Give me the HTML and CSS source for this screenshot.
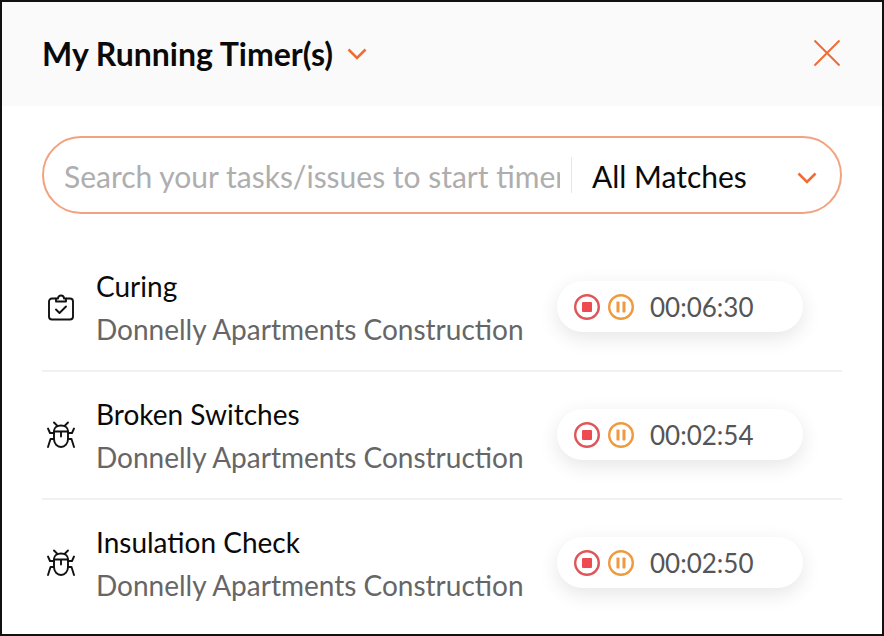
FILE: index.html
```html
<!DOCTYPE html>
<html lang="en">
<head>
<meta charset="utf-8">
<title>My Running Timer(s)</title>
<link rel="stylesheet" href="styles.css">
</head>
<body>
<main class="panel">
  <header class="head">
    <div class="head-title">
      <h1 class="title">My Running Timer(s)</h1>
      <svg class="chev-title" viewBox="0 0 20 12"><path d="M1.5 1.5 10 10l8.5-8.5"/></svg>
    </div>
    <svg class="close" viewBox="0 0 28 28"><path d="M1.5 1.5l25 25M26.500 1.500l-25 25"/></svg>
  </header>
  <section class="body">
    <div class="search">
      <input class="placeholder" type="text" placeholder="Search your tasks/issues to start timer">
      <div class="divider"></div>
      <div class="select">All Matches</div>
      <svg class="chev-select" viewBox="0 0 20 12"><path d="M1.500 1.500 10 10l8.500-8.500"/></svg>
    </div>
    <ul class="list">
      <li class="row">
        <svg class="type-icon" viewBox="0 0 30 30"><path d="M9.500 6.500H6a3 3 0 0 0-3 3v15a3 3 0 0 0 3 3h18a3 3 0 0 0 3-3v-15a3 3 0 0 0-3-3h-3.500"/><path d="M10 9.500V6.500h2c0-4 6-4 6 0h2v3z"/><path d="M10 17.500l3.500 3.500 6.500-6.500"/></svg>
        <div class="info"><div class="name">Curing</div><div class="project">Donnelly Apartments Construction</div></div>
        <div class="timer">
          <svg class="ctl stop" viewBox="0 0 26 26"><circle cx="13" cy="13" r="11.800"/><rect x="8" y="8" width="10" height="10" rx="1"/></svg>
          <svg class="ctl pause" viewBox="0 0 26 26"><circle cx="13" cy="13" r="11.800"/><rect x="8.500" y="7.500" width="3" height="11" rx=".8"/><rect x="14.500" y="7.500" width="3" height="11" rx=".8"/></svg>
          <span class="time">00:06:30</span>
        </div>
      </li>
      <li class="row">
        <svg class="type-icon" viewBox="0 0 30 30"><use href="#bug"/></svg>
        <div class="info"><div class="name">Broken Switches</div><div class="project">Donnelly Apartments Construction</div></div>
        <div class="timer">
          <svg class="ctl stop" viewBox="0 0 26 26"><circle cx="13" cy="13" r="11.800"/><rect x="8" y="8" width="10" height="10" rx="1"/></svg>
          <svg class="ctl pause" viewBox="0 0 26 26"><circle cx="13" cy="13" r="11.800"/><rect x="8.500" y="7.500" width="3" height="11" rx=".8"/><rect x="14.500" y="7.500" width="3" height="11" rx=".8"/></svg>
          <span class="time">00:02:54</span>
        </div>
      </li>
      <li class="row">
        <svg class="type-icon" viewBox="0 0 30 30"><use href="#bug"/></svg>
        <div class="info"><div class="name">Insulation Check</div><div class="project">Donnelly Apartments Construction</div></div>
        <div class="timer">
          <svg class="ctl stop" viewBox="0 0 26 26"><circle cx="13" cy="13" r="11.800"/><rect x="8" y="8" width="10" height="10" rx="1"/></svg>
          <svg class="ctl pause" viewBox="0 0 26 26"><circle cx="13" cy="13" r="11.800"/><rect x="8.500" y="7.500" width="3" height="11" rx=".8"/><rect x="14.500" y="7.500" width="3" height="11" rx=".8"/></svg>
          <span class="time">00:02:50</span>
        </div>
      </li>
    </ul>
  </section>
</main>
<svg class="defs" aria-hidden="true"><defs><g id="bug"><path d="M8 2.500l3.500 3.500M22 2.500 18.500 6"/><path d="M8 11c0-3.500 3-5.500 7-5.500s7 2 7 5.500v8c0 4.500-3 8-7 8s-7-3.500-7-8z"/><path d="M8 11.500h14M15 11.500v5"/><path d="M2 8.500l2 4.500h4M28 8.500 26 13h-4M8 19H4.500L2 27M22 19h3.500L28 27"/></g></defs></svg>
</body>
</html>
```

FILE: styles.css
```css
* { box-sizing: border-box; }
html, body { margin: 0; padding: 0; }
body { width: 884px; height: 636px; overflow: hidden; background: #fff; font-family: Lato, "Liberation Sans", sans-serif; }
.defs { width: 0; height: 0; overflow: hidden; display: block; }
.panel { width: 884px; height: 636px; border: 2px solid #111; background: #fff; display: flex; flex-direction: column; overflow: hidden; }
.head { height: 104px; flex: none; background: #fafafa; padding: 0 41px 0 40px; display: flex; align-items: center; justify-content: space-between; }
.head-title { display: flex; align-items: center; gap: 14px; }
.title { margin: 0; font-size: 32px; font-weight: 700; color: #0a0a0a; line-height: 36px; }
.chev-title { width: 20px; height: 12px; fill: none; stroke: #ee6c35; stroke-width: 2.600; }
.close { width: 28px; height: 28px; fill: none; stroke: #ee6c35; stroke-width: 2; margin-top: -3px; }
.body { flex: 1; padding: 30px 40px 0; }
.search { height: 78px; border: 2px solid #f2a27e; border-radius: 39px; display: flex; align-items: center; padding-left: 20px; }
.placeholder { width: 496px; flex: none; border: 0; padding: 0; margin: 2px 0 0; outline: 0; background: transparent; font-family: inherit; font-size: 30px; color: #0a0a0a; }
.placeholder::placeholder { color: #aeaeae; opacity: 1; }
.divider { width: 1px; height: 36px; background: #e6e6e6; margin-left: 11px; flex: none; }
.select { font-size: 30px; color: #0a0a0a; margin: 2px 0 0 20px; flex: 1; }
.chev-select { width: 20px; height: 12px; fill: none; stroke: #ee6c35; stroke-width: 2.600; margin: 5px 23px 0 0; flex: none; }
.list { list-style: none; margin: 30px 0 0; padding: 0; }
.row { height: 128px; display: flex; align-items: center; border-bottom: 2px solid #f1f1f1; padding-left: 4px; }
.row:last-child { border-bottom-color: transparent; }
.type-icon { width: 30px; height: 30px; fill: none; stroke: #111; stroke-width: 1.900; stroke-linecap: round; stroke-linejoin: round; flex: none; margin-top: -1px; }
.info { margin-left: 20px; width: 461px; flex: none; }
.name { font-size: 28px; line-height: 36px; color: #0a0a0a; margin-top: 1px; }
.project { font-size: 28px; line-height: 36px; color: #666; margin-top: 7px; }
.timer { width: 246px; height: 51px; border-radius: 26px; background: #fff; box-shadow: 0 6px 20px rgba(0,0,0,.1); display: flex; align-items: center; padding-left: 17px; flex: none; margin-top: -1px; }
.ctl { width: 26px; height: 26px; flex: none; }
.ctl circle { fill: none; stroke-width: 2.400; }
.stop circle { stroke: #e0555a; }
.stop rect { fill: #ee4b50; }
.pause { margin-left: 8px; }
.pause circle { stroke: #ef9a3c; }
.pause rect { fill: #ef9a3c; }
.time { margin-left: 16px; font-size: 26px; color: #555; }
```
